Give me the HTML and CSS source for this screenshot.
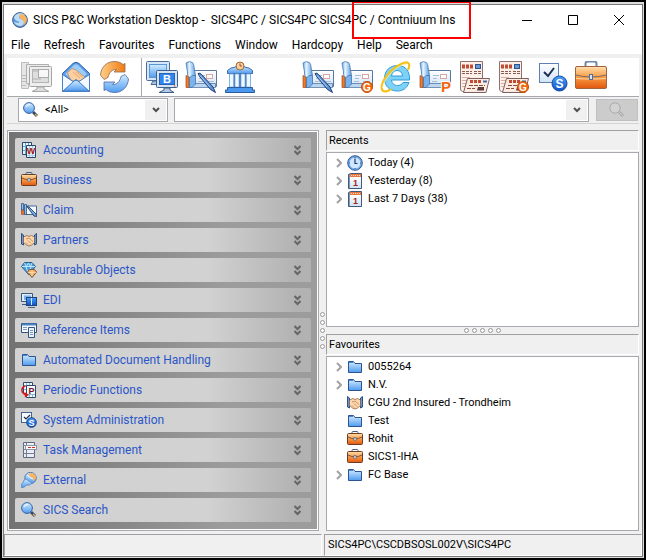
FILE: index.html
```
<!DOCTYPE html>
<html lang="en">
<head>
    <meta charset="UTF-8">
    <meta name="viewport" content="width=device-width, initial-scale=1.0">
    <title>SICS P&amp;C Workstation Desktop</title>
    <link rel="stylesheet" href="styles.css">
</head>
<body>
    <!-- Shared gradients -->
    <svg class="gradients" aria-hidden="true">
        <defs>
            <linearGradient id="blue" x1="0" y1="0" x2="0" y2="1"><stop offset="0" stop-color="#d3edff"/><stop offset="1" stop-color="#4f9bf0"/></linearGradient>
            <linearGradient id="deep" x1="0" y1="0" x2="0" y2="1"><stop offset="0" stop-color="#4aa0f8"/><stop offset="1" stop-color="#0d50c8"/></linearGradient>
            <linearGradient id="roll" x1="0" y1="0" x2="1" y2="0"><stop offset="0" stop-color="#6aa8e8"/><stop offset=".35" stop-color="#e6f5ff"/><stop offset="1" stop-color="#5b9ce0"/></linearGradient>
            <linearGradient id="orange" x1="0" y1="0" x2="0" y2="1"><stop offset="0" stop-color="#ffe0b0"/><stop offset=".45" stop-color="#f9a04a"/><stop offset="1" stop-color="#e2560c"/></linearGradient>
            <linearGradient id="arc" x1="0" y1="0" x2="1" y2="0"><stop offset="0" stop-color="#ffd08a"/><stop offset="1" stop-color="#f07a10"/></linearGradient>
            <linearGradient id="paper" x1="0" y1="0" x2="0" y2="1"><stop offset="0" stop-color="#ffffff"/><stop offset="1" stop-color="#cfe3f7"/></linearGradient>
        </defs>
    </svg>

    <!-- Icon sprite -->
    <svg class="sprite" aria-hidden="true">
        <symbol id="i-desktop" viewBox="0 0 32 32">
            <path d="M.5 1.500H7.500V27.500H.5Z" fill="#e6e6e6" stroke="#bcbcbc"/>
            <path d="M1 14.500H5M1 17.500H5M1 20.500H5M1 24.500H5" stroke="#bbb"/>
            <path d="M5.500 3.500H27.500V22.500H5.500Z" fill="#ececec" stroke="#b0b0b0"/>
            <rect x="8.500" y="5.500" width="22" height="20" rx="1" fill="#eee" stroke="#a4a4a4"/>
            <rect x="11.500" y="8.500" width="16" height="13" fill="#dedede" stroke="#b4b4b4"/>
            <rect x="17.500" y="8.500" width="10" height="8" fill="#f8f8f8" stroke="#aaa"/>
            <path d="M12 10H17M12 18H20" stroke="#c8c8c8" stroke-width="2"/>
            <path d="M16 26H23V28L28 30.500H11L16 28Z" fill="#ddd" stroke="#a8a8a8"/>
        </symbol>
        <symbol id="i-mail" viewBox="0 0 32 32">
            <path d="M2.500 12.500 13 2.500Q16 0 19 2.500L29.500 12.500V30.500H2.500Z" fill="#5a9ae8" stroke="#2c5ca4"/>
            <path d="M5 13 14 4Q16 2.500 18 4L27 13 20 19H12Z" fill="#9ccdf8"/>
            <path d="M7.500 11.500 12 7.500 16 9 26 17 21 20 12 20 9 16Z" fill="#fbcfa0" stroke="#a87850" stroke-width=".6"/>
            <path d="M13 11 20 17M16 11 23 16.500" stroke="#d89c68" stroke-width=".7"/>
            <path d="M2.500 13.500 13 20.500 16 18.500 19 20.500 29.500 13.500V30.500H2.500Z" fill="#f4faff" stroke="#4a80c4"/>
            <path d="M3 30 14 20Q16 18.500 18 20L29 30Z" fill="url(#blue)" stroke="#4a80c4"/>
        </symbol>
        <symbol id="i-refresh" viewBox="0 0 32 32">
            <path id="arrow-half" d="M1.500 14C2 6 8 .5 15 .5 19 .5 22 1.500 24 3.500L26 2.500V11H15L17.500 8.500C14 8 10 11 9 16.500L5 18.500Z" fill="url(#arc)" stroke="#8c6a58" stroke-width=".8"/>
            <path d="M29.500 18C29 26 23 31.500 16 31.500 12 31.500 9 30.500 7 28.500L5 29.500V21H16L13.500 23.500C17 24 21 21 22 15.500L26 13.500Z" fill="url(#blue)" stroke="#5068a0" stroke-width=".8"/>
        </symbol>
        <symbol id="i-monitors" viewBox="0 0 32 32">
            <path d="M7 20H15L17 23.500H5Z" fill="#a8c4e4" stroke="#466a9a"/>
            <rect x=".5" y=".5" width="23" height="19" rx="1" fill="#d6e6f6" stroke="#4c6c98"/>
            <rect x="3.500" y="3.500" width="17" height="13" fill="url(#blue)" stroke="#5c94d4"/>
            <path d="M18 27H24V29L28 31.500H13L18 29Z" fill="#b4cae4" stroke="#40608c"/>
            <rect x="10.500" y="9.500" width="21" height="17" rx="1" fill="#d6e4f2" stroke="#40608c"/>
            <rect x="13.500" y="12.500" width="15" height="11" fill="#2f86ee" stroke="#2c64b4"/>
            <circle cx="28.500" cy="25" r=".8" fill="#e05a20"/>
            <text x="21" y="22" class="glyph" font-size="11" fill="#fff">B</text>
        </symbol>
        <symbol id="i-card" viewBox="0 0 32 32">
            <path d="M8.500 9.500H31.500V25.500H8.500Z" fill="url(#paper)" stroke="#5a789e"/>
            <path d="M14 14.500H20M14 17.500H18M22 20.500H29M13 20.500H18" stroke="#a9bdd6"/>
            <rect x="21.500" y="13.500" width="6" height="4" fill="#fff" stroke="#dca6a0"/>
            <path d="M3.500 24.500 6 22.500H30.500V26.500H3.500Z" fill="#bcd6f0" stroke="#456c9c" stroke-width=".7"/>
            <path d="M1 14.500 4 16V26.500H1Z" fill="#f07a28" stroke="#a04c1c" stroke-width=".7"/>
            <path d="M4.500 14.500H10.500V23L7 26.500H4.500Z" fill="#7ab4ee" stroke="#3f70ac" stroke-width=".8"/>
            <path d="M1 2Q4 -.5 7.500 1.500 9 3 9 6L10.500 14.500Q7 13.500 5 16.500 2 16 2.500 11Z" fill="url(#roll)" stroke="#4a78b0" stroke-width=".8"/>
        </symbol>
        <symbol id="i-pen" viewBox="0 0 32 32">
            <path d="M13 12.500Q15 11.500 16.500 13.500L28 26 30.500 31.500 25.500 28.500 15 16Z" fill="#5c92d8" stroke="#213f78"/>
            <path d="M15 14.500 25 26" stroke="#a6cdf5"/>
        </symbol>
        <symbol id="i-bank" viewBox="0 0 32 32">
            <path d="M3.500 9.500 7 7Q12 6.500 13 4.500H19Q20 6.500 25 7L28.500 9.500V12.500H3.500Z" fill="url(#blue)" stroke="#3f6ca4"/>
            <circle cx="16" cy="5" r="4" fill="#fbd09a" stroke="#a46438"/>
            <path d="M16 2.500V5H18" fill="none" stroke="#7a3c20" stroke-width=".8"/>
            <rect x="5" y="13" width="22" height="14" fill="#44689c"/>
            <path d="M5.500 13H9.500V26H5.500ZM11 13H15V26H11ZM17 13H21V26H17ZM22.500 13H26.500V26H22.500Z" fill="#eef8ff" stroke="#7eb2ea" stroke-width=".8"/>
            <path d="M3.500 26.500H28.500V29H30.500V31.500H1.500V29H3.500Z" fill="#4a98f0" stroke="#2c5c9e"/>
        </symbol>
        <symbol id="i-tag-g" viewBox="0 0 32 32">
            <circle cx="26" cy="26" r="5.500" fill="#f26a10" stroke="#c24e08"/>
            <text x="26" y="30" class="glyph" font-size="10" fill="#fff">G</text>
        </symbol>
        <symbol id="i-tag-p" viewBox="0 0 32 32">
            <text x="27" y="31" class="glyph" font-size="15" fill="#f26a10" stroke="#fff" stroke-width="2" paint-order="stroke">P</text>
        </symbol>
        <symbol id="i-web" viewBox="0 0 32 32">
            <path d="M29.500 19H11.500C12 23 15 24.500 17.500 24.500 20 24.500 22 23.500 23 21.500H29C27 27 23 30 17.500 30 9.500 30 4.500 25 4.500 17.500 4.500 9.500 10 4.500 17.500 4.500 25.500 4.500 30 10 29.500 19ZM11.500 15H22.500C22.500 11.500 20 9.500 17 9.500 14 9.500 12 11.500 11.500 15Z" fill="#7ed2f8" stroke="#2c9cdc" fill-rule="evenodd"/>
            <path d="M28 9C31 2 28-.5 21 3 10 8 0 21 2 28.500 3 32 9 30 11 28" fill="none" stroke="#f6c21a" stroke-width="2.200"/>
            <path d="M27 3C18 3 3 18 2.500 27" fill="none" stroke="#fff1a0" stroke-width=".8"/>
        </symbol>
        <symbol id="i-news" viewBox="0 0 32 32">
            <path d="M2.500 .5H24.500V30.500H4.500Q2.500 30 2.500 28Z" fill="#fdf0e8" stroke="#8c7072"/>
            <path d="M4 5.500H15" stroke="#c04c34" stroke-width="4" stroke-dasharray="3 1"/>
            <rect x="17.500" y="3.500" width="5" height="4" fill="#6c98d0" stroke="#2c5494"/>
            <path d="M4 10.500H14M4 12.500H14M16 10.500H23M16 12.500H23" stroke="#8c5a54" stroke-dasharray="3 1"/>
            <path d="M4 16.500H12M4 19.500H10M4 22.500H8M4 25.500H8" stroke="#dcb0a0"/>
            <path d="M9.500 17.500H31.500L28 31.500H5.500Z" fill="#fdebe0" stroke="#7c6064"/>
            <path d="M12 20.500H23" stroke="#c04c34" stroke-width="3" stroke-dasharray="3 1"/>
            <path d="M25 20.500H29" stroke="#3a6cb0" stroke-width="2"/>
            <path d="M11 24.500H27M9 27.500H17" stroke="#8a4a44" stroke-dasharray="4 1"/>
            <path d="M20 26H26V29.500H19Z" fill="#5e3c44"/>
        </symbol>
        <symbol id="i-check" viewBox="0 0 32 32">
            <rect x="3.500" y="2.500" width="19" height="19" fill="url(#paper)" stroke="#5c80b0"/>
            <path d="M8 11 12 15 18 7" fill="none" stroke="#1c3050" stroke-width="2"/>
            <circle cx="23.500" cy="22.500" r="7.500" fill="url(#deep)" stroke="#184a9c"/>
            <text x="23.500" y="27" class="glyph" font-size="12" fill="#fff">S</text>
        </symbol>
        <symbol id="i-case" viewBox="0 0 32 32">
            <path d="M10.500 6V2.500Q10.500 .5 13 .5H19Q21.500 .5 21.500 2.500V6" fill="none" stroke="#6c88ac" stroke-width="2"/>
            <rect x=".5" y="5.500" width="31" height="22" rx="1.500" fill="url(#orange)" stroke="#9c6440"/>
            <path d="M1 14Q8 16 16 16T31 14" fill="none" stroke="#7a6a6c"/>
            <path d="M1 17.500Q8 18 16 18T31 17.500" fill="none" stroke="#ffd8a4"/>
            <rect x="14.500" y="13.500" width="3" height="5" fill="#d4e4f6" stroke="#50709c"/>
        </symbol>

        <!-- 16px icons -->
        <symbol id="s-app" viewBox="0 0 16 16">
            <circle cx="8" cy="8" r="7.400" fill="#5c9ce4" stroke="#50607c"/>
            <path d="M2 6C3 1 10 0 13 3L8 4C6 5 8 7 10 7.500 13 9 13 12 9 14 5 14 3 12 2 10L7 11C8 10 6 9 4 8.500Z" fill="#bcdcf8"/>
            <path d="M8 2Q13 2 15 7 14 12 11 13 13 9 10 7.500 6 6 8 2Z" fill="#f9b45c"/>
        </symbol>
        <symbol id="s-accounting" viewBox="0 0 16 16">
            <path d="M1.500 .5H10.500V12.500H1.500Z" fill="#e8f4ff" stroke="#2c4468"/>
            <path d="M2 4.500H10M2 8.500H10M4.500 1V12M7.500 1V12" stroke="#64a8d4"/>
            <path d="M5.500 3.500H14.500V15.500H5.500Z" fill="#e8f4ff" stroke="#2c4468"/>
            <path d="M6 13.500H14M8.500 4V15M11.500 4V15" stroke="#a4d0ec"/>
            <text x="10" y="12" class="glyph" font-size="9" fill="#a81414">W</text>
        </symbol>
        <symbol id="s-case" viewBox="0 0 16 16">
            <path d="M5 3V1.500Q5 .5 6 .5H10Q11 .5 11 1.500V3" fill="none" stroke="#50607c"/>
            <rect x=".5" y="2.500" width="15" height="11" rx="1" fill="url(#orange)" stroke="#6c3c24"/>
            <path d="M1 6Q5 8 8 8T15 6" fill="none" stroke="#7a5048"/>
            <rect x="7" y="6.500" width="2" height="3" fill="#dceafa" stroke="#50607c" stroke-width=".6"/>
        </symbol>
        <symbol id="s-claim" viewBox="0 0 16 16">
            <path d="M4.500 4H15.500V12.500H4.500Z" fill="#f4f9ff" stroke="#466890"/>
            <path d="M.5 6V12.500H3.500V9Z" fill="#ee6c24" stroke="#8c4424" stroke-width=".6"/>
            <path d="M.5 1.500H2.500V8H.5ZM3.500 2.500H5.500V12.500H3.500Z" fill="#8cc0f0" stroke="#2c5484" stroke-width=".8"/>
            <path d="M6 4.500 8 5 15 12 15.500 14.500 13 14Z" fill="#7eb0e6" stroke="#2c4870"/>
        </symbol>
        <symbol id="s-partners" viewBox="0 0 16 16">
            <path d="M.5 1.500 2.500 3V13L.5 12ZM15.500 1.500 13.500 3V13L15.500 12Z" fill="#5c98e4" stroke="#30507c"/>
            <path d="M2.500 5 6 3.500 8 4.500 10.500 3.500 13.500 5V10.500L10.500 13Q8 15 5.500 13L2.500 10.500Z" fill="#fdd8ae" stroke="#94603c" stroke-width=".8"/>
            <path d="M5 7 8 6 12 9.500M5 10.500 7 12.500M7 8.500 10 11.500" fill="none" stroke="#c07c4c" stroke-width=".8"/>
        </symbol>
        <symbol id="s-objects" viewBox="0 0 16 16">
            <path d="M3.500 .5H11L14.500 4.500 7.500 12.500.5 4.500Z" fill="#4c9ce0" stroke="#28608c"/>
            <path d="M1 4.500H14M3.500 1 5.500 4.500 7.500 1 9.500 4.500 11 1M5 5 7.500 11.500 10 5" fill="none" stroke="#c8f0ff" stroke-width=".9"/>
            <path d="M8.500 7.500H13.500L15.500 10 11 15.500 6.500 10Z" fill="#f4b068" stroke="#7c5034"/>
            <path d="M7 10.500H15M11 8V14" stroke="#ffe8c0" stroke-width=".7"/>
        </symbol>
        <symbol id="s-edi" viewBox="0 0 16 16">
            <path d="M.5 1.500H11.500V9.500H.5ZM1 12.500H6" fill="#dcecfb" stroke="#38587e"/>
            <rect x="3" y="3.500" width="7" height="4.500" fill="#78b0ec"/>
            <rect x="5.500" y="5.500" width="10" height="8" fill="url(#deep)" stroke="#1c4480"/>
            <path d="M10.500 6V13" stroke="#d4eaff"/>
            <path d="M7 15.500H14" stroke="#48688e"/>
        </symbol>
        <symbol id="s-reference" viewBox="0 0 16 16">
            <path d="M.5 1.500H15.500V10.500H.5Z" fill="#f6faff" stroke="#34547c"/>
            <path d="M1 2.500H15" stroke="#4c84c8" stroke-width="2"/>
            <path d="M2 5.500H6M2 7.500H6" stroke="#7c98bc"/>
            <path d="M7.500 5.500H13.500V15.500H7.500Z" fill="#e8f2ff" stroke="#34547c"/>
            <path d="M9 8.500H12M9 10.500H12M9 12.500H12" stroke="#7c98bc"/>
        </symbol>
        <symbol id="s-folder" viewBox="0 0 16 16">
            <path d="M1.500 2.500H6.500L8 4.500H14.500V13.500H1.500Z" fill="url(#blue)" stroke="#2c5490"/>
            <path d="M2 3.500H6" stroke="#4888d8"/>
        </symbol>
        <symbol id="s-periodic" viewBox="0 0 16 16">
            <path d="M2.500 .5H11.500V11.500H2.500Z" fill="#f2f9ff" stroke="#34486c"/>
            <path d="M5.500 1V11M8.500 1V11M3 3.500H11M3 7.500H11" stroke="#7cbcdc"/>
            <path d="M5.500 3.500H14.500V15.500H5.500Z" fill="#f2f9ff" stroke="#34486c"/>
            <path d="M8.500 12V15M11.500 12V15M6 12.500H14" stroke="#7cbcdc"/>
            <text x="10.500" y="12" class="glyph" font-size="9" fill="#7c1420">P</text>
            <path d="M4.500 4Q.5 5 1 9 1.500 12 5 12.500" fill="none" stroke="#d81818" stroke-width="1.500"/>
            <path d="M3.500 10 8 13 4 15.500Z" fill="#d81818"/>
        </symbol>
        <symbol id="s-admin" viewBox="0 0 16 16">
            <rect x=".5" y=".5" width="10" height="10" fill="#f6faff" stroke="#44648c"/>
            <path d="M3 5 5 7 9 3" fill="none" stroke="#1c3050" stroke-width="1.200"/>
            <circle cx="10.500" cy="10.500" r="4.800" fill="url(#deep)" stroke="#143c84"/>
            <text x="10.500" y="14" class="glyph" font-size="9" fill="#fff">S</text>
        </symbol>
        <symbol id="s-task" viewBox="0 0 16 16">
            <path d="M2.500 .5H13.500V15.500H2.500Z" fill="#e8eef8" stroke="#606880"/>
            <path d="M2 3.500H13M2 7.500H14M2 11.500H14M5.500 1V15" stroke="#747c94"/>
            <rect x="4.500" y="3.500" width="11" height="4" fill="#fff" stroke="#8c94a8"/>
            <path d="M7 5.500H14" stroke="#d82828" stroke-dasharray="3 1"/>
        </symbol>
        <symbol id="s-external" viewBox="0 0 16 16">
            <circle cx="9.500" cy="6" r="5.700" fill="url(#blue)" stroke="#5078ac"/>
            <path d="M7 2Q12-1 15 4 15 8 12 9 13 6 10 5 7 4 9 3Z" fill="#f8b460"/>
            <path d="M5 7Q2 8 2.500 10 0 11 .5 15.500 4 16 5 13 9 14 11 11Z" fill="url(#blue)" stroke="#5084c4" stroke-width=".8"/>
            <path d="M6 3Q9 6 12 7" stroke="#fff" fill="none"/>
        </symbol>
        <symbol id="s-search" viewBox="0 0 16 16">
            <path d="M10 10 14 14" stroke="#34486c" stroke-width="3"/>
            <path d="M12 12 14 14" stroke="#f0b050" stroke-width="1.200"/>
            <circle cx="6" cy="6" r="5.400" fill="url(#blue)" stroke="#3860a0"/>
            <path d="M3 5Q4 2.500 7 2.500" fill="none" stroke="#fff"/>
        </symbol>
        <symbol id="s-find" viewBox="0 0 16 16">
            <path d="M10 10 14 14" stroke="#aaa" stroke-width="3"/>
            <path d="M10.500 10.500 13.500 13.500" stroke="#d4d4d4"/>
            <circle cx="6" cy="6" r="5.200" fill="#d2d2d2" stroke="#aaa"/>
        </symbol>
        <symbol id="s-clock" viewBox="0 0 16 16">
            <circle cx="8" cy="8" r="7.300" fill="#6ca8ec" stroke="#34588c"/>
            <circle cx="8" cy="8" r="5.500" fill="#cfe6ff"/>
            <path d="M8 3.500V8.500H10.500" fill="none" stroke="#1c3c70" stroke-width="1.200"/>
            <path d="M8 2V3M8 13V14M2 8H3M13 8H14" stroke="#34588c"/>
        </symbol>
        <symbol id="s-calendar" viewBox="0 0 16 16">
            <path d="M1.500 1.500 3.500.5H14.500V15.500H1.500Z" fill="#8098b4" stroke="#44587c"/>
            <rect x="3" y="4" width="11" height="11" fill="url(#paper)"/>
            <rect x="3" y="1" width="11" height="3" fill="#e87840"/>
            <path d="M4 2.500H13" stroke="#ffd8b8" stroke-dasharray="1 1"/>
            <text x="8.500" y="13" class="glyph" font-size="9" fill="#a02818">1</text>
        </symbol>
        <symbol id="s-expand" viewBox="0 0 7 11">
            <path d="M.5 1 3.500 4 6.500 1M.5 6 3.500 9 6.500 6" fill="none" stroke="#666" stroke-width="2"/>
        </symbol>
        <symbol id="s-arrow" viewBox="0 0 6 10">
            <path d="M1 1 5 5 1 9" fill="none" stroke="#a2a2a2" stroke-width="2"/>
        </symbol>
        <symbol id="s-down" viewBox="0 0 8 6">
            <path d="M1 1 4 4 7 1" fill="none" stroke="#505050" stroke-width="2"/>
        </symbol>
    </svg>

    <div class="window">
        <header class="titlebar">
            <svg class="icon"><use href="#s-app"/></svg>
            <h1>SICS P&amp;C Workstation Desktop -&nbsp; SICS4PC / SICS4PC SICS4PC / Contniuum Ins</h1>
            <div class="window-buttons">
                <button type="button" aria-label="Minimize"><svg viewBox="0 0 10 10"><path d="M0 5.500H10"/></svg></button>
                <button type="button" aria-label="Maximize"><svg viewBox="0 0 10 10"><path d="M.5 .5H9.500V9.500H.5Z"/></svg></button>
                <button type="button" aria-label="Close"><svg viewBox="0 0 10 10"><path d="M0 0 10 10M10 0 0 10"/></svg></button>
            </div>
            <div class="marker"></div>
        </header>

        <nav class="menu">
            <button type="button">File</button>
            <button type="button">Refresh</button>
            <button type="button">Favourites</button>
            <button type="button">Functions</button>
            <button type="button">Window</button>
            <button type="button">Hardcopy</button>
            <button type="button">Help</button>
            <button type="button">Search</button>
        </nav>

        <div class="toolbar">
            <div class="tools">
                <button type="button" aria-label="Desktop" disabled><svg><use href="#i-desktop"/></svg></button>
                <button type="button" aria-label="Mail"><svg><use href="#i-mail"/></svg></button>
                <button type="button" aria-label="Refresh"><svg><use href="#i-refresh"/></svg></button>
            </div>
            <div class="tools">
                <button type="button" aria-label="Business desktops"><svg><use href="#i-monitors"/></svg></button>
                <button type="button" aria-label="Claim"><svg><use href="#i-card"/><use href="#i-pen"/></svg></button>
                <button type="button" aria-label="Bank"><svg><use href="#i-bank"/></svg></button>
                <span class="spacer"></span>
                <button type="button" aria-label="New claim"><svg><use href="#i-card"/><use href="#i-pen"/></svg></button>
                <button type="button" aria-label="Claim G"><svg><use href="#i-card"/><use href="#i-tag-g"/></svg></button>
                <button type="button" aria-label="Web"><svg><use href="#i-web"/></svg></button>
                <button type="button" aria-label="Claim P"><svg><use href="#i-card"/><use href="#i-tag-p"/></svg></button>
                <button type="button" aria-label="News"><svg><use href="#i-news"/></svg></button>
                <button type="button" aria-label="News G"><svg><use href="#i-news"/><use href="#i-tag-g"/></svg></button>
                <button type="button" aria-label="System check"><svg><use href="#i-check"/></svg></button>
                <button type="button" aria-label="Business"><svg><use href="#i-case"/></svg></button>
            </div>
        </div>

        <form class="search">
            <div class="combo scope">
                <svg class="icon"><use href="#s-search"/></svg>
                <select aria-label="Search scope"><option>&lt;All&gt;</option></select>
                <span class="drop"><svg><use href="#s-down"/></svg></span>
            </div>
            <div class="combo query">
                <select aria-label="Search text"><option></option></select>
                <span class="drop"><svg><use href="#s-down"/></svg></span>
            </div>
            <button type="button" class="find" aria-label="Find" disabled><svg class="icon"><use href="#s-find"/></svg></button>
        </form>

        <main>
            <nav class="folders">
                <button type="button"><svg class="icon"><use href="#s-accounting"/></svg><span>Accounting</span><svg class="expand"><use href="#s-expand"/></svg></button>
                <button type="button"><svg class="icon"><use href="#s-case"/></svg><span>Business</span><svg class="expand"><use href="#s-expand"/></svg></button>
                <button type="button"><svg class="icon"><use href="#s-claim"/></svg><span>Claim</span><svg class="expand"><use href="#s-expand"/></svg></button>
                <button type="button"><svg class="icon"><use href="#s-partners"/></svg><span>Partners</span><svg class="expand"><use href="#s-expand"/></svg></button>
                <button type="button"><svg class="icon"><use href="#s-objects"/></svg><span>Insurable Objects</span><svg class="expand"><use href="#s-expand"/></svg></button>
                <button type="button"><svg class="icon"><use href="#s-edi"/></svg><span>EDI</span><svg class="expand"><use href="#s-expand"/></svg></button>
                <button type="button"><svg class="icon"><use href="#s-reference"/></svg><span>Reference Items</span><svg class="expand"><use href="#s-expand"/></svg></button>
                <button type="button"><svg class="icon"><use href="#s-folder"/></svg><span>Automated Document Handling</span><svg class="expand"><use href="#s-expand"/></svg></button>
                <button type="button"><svg class="icon"><use href="#s-periodic"/></svg><span>Periodic Functions</span><svg class="expand"><use href="#s-expand"/></svg></button>
                <button type="button"><svg class="icon"><use href="#s-admin"/></svg><span>System Administration</span><svg class="expand"><use href="#s-expand"/></svg></button>
                <button type="button"><svg class="icon"><use href="#s-task"/></svg><span>Task Management</span><svg class="expand"><use href="#s-expand"/></svg></button>
                <button type="button"><svg class="icon"><use href="#s-external"/></svg><span>External</span><svg class="expand"><use href="#s-expand"/></svg></button>
                <button type="button"><svg class="icon"><use href="#s-search"/></svg><span>SICS Search</span><svg class="expand"><use href="#s-expand"/></svg></button>
            </nav>

            <div class="splitter vertical"><i></i><i></i><i></i><i></i><i></i></div>

            <div class="lists">
                <section>
                    <h2>Recents</h2>
                    <ul>
                        <li><svg class="arrow"><use href="#s-arrow"/></svg><svg class="icon"><use href="#s-clock"/></svg>Today (4)</li>
                        <li><svg class="arrow"><use href="#s-arrow"/></svg><svg class="icon"><use href="#s-calendar"/></svg>Yesterday (8)</li>
                        <li><svg class="arrow"><use href="#s-arrow"/></svg><svg class="icon"><use href="#s-calendar"/></svg>Last 7 Days (38)</li>
                    </ul>
                </section>
                <div class="splitter"><i></i><i></i><i></i><i></i><i></i></div>
                <section>
                    <h2>Favourites</h2>
                    <ul>
                        <li><svg class="arrow"><use href="#s-arrow"/></svg><svg class="icon"><use href="#s-folder"/></svg>0055264</li>
                        <li><svg class="arrow"><use href="#s-arrow"/></svg><svg class="icon"><use href="#s-folder"/></svg>N.V.</li>
                        <li><svg class="arrow"></svg><svg class="icon"><use href="#s-partners"/></svg>CGU 2nd Insured - Trondheim</li>
                        <li><svg class="arrow"></svg><svg class="icon"><use href="#s-folder"/></svg>Test</li>
                        <li><svg class="arrow"></svg><svg class="icon"><use href="#s-case"/></svg>Rohit</li>
                        <li><svg class="arrow"></svg><svg class="icon"><use href="#s-case"/></svg>SICS1-IHA</li>
                        <li><svg class="arrow"><use href="#s-arrow"/></svg><svg class="icon"><use href="#s-folder"/></svg>FC Base</li>
                    </ul>
                </section>
            </div>
        </main>

        <footer>
            <div></div>
            <div>SICS4PC\CSCDBSOSL002V\SICS4PC</div>
        </footer>
    </div>
</body>
</html>
```
FILE: styles.css
```
:root {
    --face: #f0f0f0;
    --line: #a8a9ae;
    --link: #2a56c8;
    --ui: Roboto, "Segoe UI", sans-serif;
    --list: Roboto, Arial, sans-serif;
}

* {
    box-sizing: border-box;
}

body {
    margin: 0;
    min-height: 100vh;
    display: flex;
    border: 2px solid #000;
    background: #dcdcdc;
    font: 12px/18px var(--ui);
    color: #000;
}

button,
select {
    font: inherit;
    color: inherit;
    margin: 0;
    padding: 0;
    border: 0;
    background: none;
}

svg {
    display: block;
    flex: none;
}

.gradients {
    position: absolute;
    width: 0;
    height: 0;
}

.sprite {
    display: none;
}

.glyph {
    font-family: "Liberation Sans", Arial, sans-serif;
    font-weight: bold;
    text-anchor: middle;
}

.icon {
    width: 16px;
    height: 16px;
}

.window {
    flex: 1;
    display: flex;
    flex-direction: column;
    margin: 2px 1px 1px;
    border: 1px solid #777;
    background: var(--face);
}

/* Title bar */
.titlebar {
    position: relative;
    display: flex;
    align-items: center;
    gap: 5px;
    height: 30px;
    padding-left: 8px;
    background: #fff;
}

.titlebar h1 {
    flex: 1;
    margin: 0;
    font-size: 12px;
    font-weight: normal;
    white-space: nowrap;
}

.window-buttons {
    display: flex;
}

.window-buttons button {
    width: 46px;
    height: 30px;
    display: grid;
    place-items: center;
}

.window-buttons svg {
    width: 10px;
    height: 10px;
    fill: none;
    stroke: #000;
}

.marker {
    position: absolute;
    left: 348px;
    top: -4px;
    width: 119px;
    height: 38px;
    border: 2px solid #f00;
    pointer-events: none;
}

/* Menu bar */
.menu {
    display: flex;
    gap: 14px;
    padding: 1px 7px 0;
    background: #fff;
}

/* Toolbar */
.toolbar {
    display: flex;
    margin: 4px 3px 0;
    background: #fff;
    border-bottom: 1px solid var(--line);
}

.tools {
    display: flex;
    gap: 7px;
    padding: 3px 4px;
}

.tools:first-child {
    padding: 3px 10px 3px 14px;
    border-right: 1px solid var(--line);
}

.tools svg,
.spacer {
    width: 32px;
    height: 32px;
}

/* Search row */
.search {
    display: flex;
    margin: 0 3px;
    padding: 1px 1px 1px 11px;
    gap: 6px;
    border-bottom: 1px solid #d4d4d4;
}

.combo {
    display: flex;
    align-items: center;
    height: 24px;
    padding: 1px;
    background: #fff;
    border: 1px solid var(--line);
}

.scope {
    width: 150px;
    padding-left: 4px;
    gap: 6px;
}

.query {
    flex: 1;
}

.combo select {
    flex: 1;
    min-width: 0;
    appearance: none;
    font: 11px/18px var(--list);
}

.drop {
    width: 21px;
    height: 20px;
    display: grid;
    place-items: center;
    background: var(--face);
}

.drop svg {
    width: 8px;
    height: 6px;
}

.find {
    width: 42px;
    height: 22px;
    margin: 1px 0 0 1px;
    display: grid;
    place-items: center;
    background: #ccc;
    border: 1px solid #bfbfbf;
}

/* Work area */
main {
    flex: 1;
    display: grid;
    grid-template-columns: 312fr 7px 313fr;
    margin: 6px 3px 3px;
}

.folders {
    display: flex;
    flex-direction: column;
    gap: 6px;
    padding: 7px;
    border: 1px solid var(--line);
    outline: 1px solid #fff;
    outline-offset: -2px;
    background: linear-gradient(to right, #727272, #9c9c9c 70%);
    background-clip: padding-box;
}

.folders button {
    display: flex;
    align-items: center;
    gap: 6px;
    height: 24px;
    padding: 0 10px 0 6px;
    border-radius: 2px 2px 0 0;
    background: linear-gradient(to right, #d2d2d2 65%, #b2b2b2 95%);
    color: var(--link);
    text-align: left;
}

.folders span {
    flex: 1;
}

.expand {
    width: 7px;
    height: 11px;
}

.splitter {
    display: flex;
    align-items: center;
    justify-content: center;
    gap: 3px;
    height: 7px;
}

.splitter.vertical {
    flex-direction: column;
    height: auto;
}

.splitter i {
    width: 5px;
    height: 5px;
    border: 1px solid #999;
    border-radius: 50%;
    background: #fff;
}

.lists {
    display: flex;
    flex-direction: column;
    font: 11px/18px var(--list);
}

.lists section {
    flex: 1;
    display: flex;
    flex-direction: column;
}

.lists h2 {
    margin: 0 0 1px;
    padding: 1px 2px 0;
    border: 1px solid #a0a0a0;
    border-right-color: #fff;
    border-bottom-color: #fff;
    font-size: 11px;
    font-weight: normal;
}

.lists ul {
    flex: 1;
    margin: 0;
    padding: 1px 9px;
    list-style: none;
    background: #fff;
    border: 1px solid var(--line);
}

.lists li {
    display: flex;
    align-items: center;
    gap: 5px;
    height: 18px;
    white-space: nowrap;
}

.arrow {
    width: 6px;
    height: 10px;
}

/* Status bar */
footer {
    display: grid;
    grid-template-columns: 1fr 1fr;
    gap: 2px;
    font: 11px/18px var(--list);
}

footer div {
    height: 22px;
    padding: 1px 3px;
    border: 1px solid #a0a0a0;
    border-right-color: #fff;
    border-bottom-color: #fff;
}
```
